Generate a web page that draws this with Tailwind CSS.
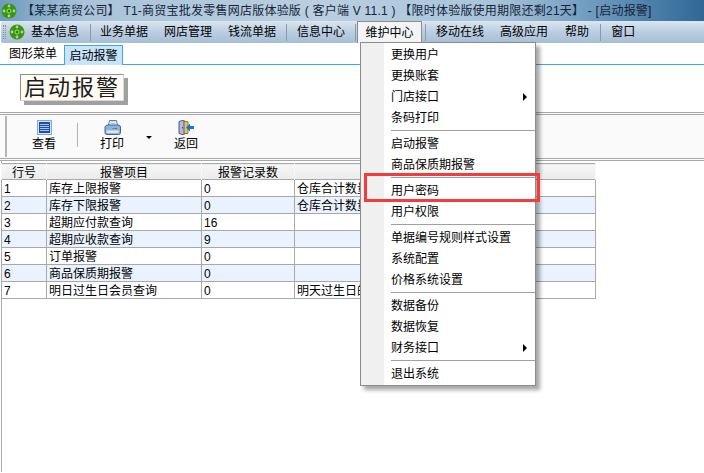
<!DOCTYPE html>
<html lang="zh">
  <head>
    <meta charset="UTF-8" />
    <title>启动报警</title>
    <script src="https://cdn.jsdelivr.net/npm/@tailwindcss/browser@4"></script>
  </head>
  <body class="relative w-[704px] h-[473px] overflow-hidden bg-white text-[12px] leading-[14px] text-black font-['Liberation_Sans','Noto_Sans_CJK_SC',sans-serif]">
    <!-- title bar -->
    <div class="h-[21px] flex items-center pl-[1px] bg-[linear-gradient(90deg,#6d9cc0_0%,#a9c3d8_12%,#b9cfe0_45%,#a9c4da_70%,#5f8fb5_88%,#2f6795_100%)] text-[#15233a]">
      <svg width="16" height="16" viewBox="0 0 16 16" class="shrink-0">
        <circle cx="8" cy="8" r="7.500" fill="#3c9414" />
        <circle cx="8" cy="8" r="2" fill="#2f7d10" stroke="#a6dc86" />
        <circle cx="8" cy="3" r="1.400" fill="#a6dc86" /><circle cx="8" cy="13" r="1.400" fill="#a6dc86" />
        <circle cx="3" cy="8" r="1.400" fill="#a6dc86" /><circle cx="13" cy="8" r="1.400" fill="#a6dc86" />
      </svg>
      <span class="ml-[5px] whitespace-pre tracking-[0.23px]">【某某商贸公司】 T1-商贸宝批发零售网店版体验版 ( 客户端 V 11.1 ) 【限时体验版使用期限还剩21天】 - [启动报警]</span>
    </div>

    <!-- menu bar -->
    <div class="h-[22px] ml-[1px] flex items-center bg-[linear-gradient(180deg,#dbe6f0_0%,#bdd0e2_45%,#a5bed6_100%)] rounded-l-[2px]">
      <div class="w-[3px] h-[14px] ml-[2px] border-x border-dotted border-[#7f8fa0]"></div>
      <svg width="16" height="16" viewBox="0 0 16 16" class="ml-[3px] shrink-0">
        <circle cx="8" cy="8" r="7.500" fill="#3c9414" />
        <circle cx="8" cy="8" r="2" fill="#2f7d10" stroke="#a6dc86" />
        <circle cx="8" cy="3" r="1.400" fill="#a6dc86" /><circle cx="8" cy="13" r="1.400" fill="#a6dc86" />
        <circle cx="3" cy="8" r="1.400" fill="#a6dc86" /><circle cx="13" cy="8" r="1.400" fill="#a6dc86" />
      </svg>
      <span class="ml-[6px]">基本信息</span>
      <div class="w-px h-[17px] bg-[#8c9aa8] ml-[11px]"></div>
      <span class="ml-[9px]">业务单据</span>
      <span class="ml-[16px]">网店管理</span>
      <span class="ml-[16px]">钱流单据</span>
      <div class="w-px h-[17px] bg-[#8c9aa8] ml-[10px]"></div>
      <span class="ml-[10px]">信息中心</span>
      <div class="w-px h-[17px] bg-[#8c9aa8] ml-[10px]"></div>
      <span class="ml-[1px] h-[22px] w-[65px] flex items-center justify-center bg-[#f2f4f6] border border-b-0 border-[#8c8c8c]">维护中心</span>
      <div class="w-px h-[17px] bg-[#8c9aa8] ml-[3px]"></div>
      <span class="ml-[10px]">移动在线</span>
      <span class="ml-[16px]">高级应用</span>
      <span class="ml-[17px]">帮助</span>
      <div class="w-px h-[17px] bg-[#8c9aa8] ml-[11px]"></div>
      <span class="ml-[10px]">窗口</span>
    </div>

    <!-- tabs -->
    <div class="h-[22px] flex items-end pl-[5px] border-b border-[#3da5f4]">
      <div class="h-[20px] w-[59px] flex items-center pl-[4px]">图形菜单</div>
      <div class="h-[20px] w-[59px] -mb-px flex items-center justify-center border border-b-0 border-[#3da5f4] bg-[#c7e4fb]">启动报警</div>
    </div>

    <!-- report title -->
    <div class="h-[47px] pt-[9px] pl-[20px]">
      <div class="w-[104px] h-[27px] flex items-center justify-center bg-[#fffaf2] border border-[#d8d8d8] border-t-[#8f8f8f] border-l-[#8f8f8f] shadow-[4px_4px_0_#a0a0a0] text-[22px] tracking-[2px] text-[#1c1c1c]">启动报警</div>
    </div>

    <!-- toolbar -->
    <div class="h-[49px] flex items-stretch bg-[#fafafa] border-y-[3px] border-double border-[#a8a8a8]">
      <div class="w-[2px] my-[1px] ml-[5px] border-x border-[#b4b4b4]"></div>
      <div class="w-[62px] ml-[6px] flex flex-col items-center pt-[5px]">
        <svg width="15" height="15" viewBox="0 0 15 15">
          <rect x="0.500" y="0.500" width="14" height="14" fill="#d6e6f8" stroke="#7fa8dc" />
          <rect x="2" y="2" width="11" height="11" fill="#1d4fa6" />
          <path d="M3 4.500h9M3 6.500h9M3 8.500h9M3 10.500h9" stroke="#a9c4ea" stroke-width="1" />
        </svg>
        <span class="mt-[2px]">查看</span>
      </div>
      <div class="w-px h-[24px] mt-[8px] ml-[2px] bg-[#b4b4b4]"></div>
      <div class="w-[62px] ml-[3px] flex flex-col items-center pt-[5px]">
        <svg width="17" height="15" viewBox="0 0 17 15">
          <path d="M5.500 0.500h7l1 5h-9z" fill="#f6f8fb" stroke="#5f7d9e" />
          <path d="M6.500 2h5M6.500 3.500h5" stroke="#b8c6d6" />
          <path d="M1 7 Q1.500 5 4 5h10q2.500 0 2.500 2v5.500q0 2-2 2H3q-2 0-2-2z" fill="#8fb2dc" stroke="#3f6797" />
          <path d="M2.500 10.500h12v2.500h-12z" fill="#d9e6f5" />
          <path d="M8.500 8h2v1h-2z" fill="#38a038" /><path d="M11 8h2v1h-2z" fill="#d84040" />
        </svg>
        <span class="mt-[2px]">打印</span>
      </div>
      <div class="ml-[3px] mt-[21px] w-0 h-0 border-x-[3px] border-x-transparent border-t-[3px] border-t-black"></div>
      <div class="w-[46px] ml-[11px] flex flex-col items-center pt-[5px]">
        <svg width="16" height="15" viewBox="0 0 16 15">
          <path d="M3 1.500h7v12H3z" fill="#f2c04c" stroke="#8f7a3a" />
          <path d="M1 1.500l5-1.500v15l-5-1.500z" fill="#aebbdc" stroke="#4d5d8c" />
          <path d="M4 7h1v1.500H4z" fill="#3d4f80" />
          <path d="M8 7.500l4-4v2.500h4v3h-4v2.500z" fill="#0f78d8" />
        </svg>
        <span class="mt-[2px]">返回</span>
      </div>
    </div>

    <!-- grid -->
    <div class="h-[311px] ml-[1px] pt-[2px] border-l border-[#a8a8a8]">
      <table class="w-[595px] table-fixed border-collapse -ml-px">
        <colgroup>
          <col class="w-[45px]" /><col class="w-[155px]" /><col class="w-[93px]" /><col />
        </colgroup>
        <thead>
          <tr class="h-[16px] bg-[linear-gradient(180deg,#f6f6f6,#ececec)] border border-[#a8a8a8]">
            <th class="font-normal leading-[12px] pt-[2px] border-x border-[#f8f8f8]">行号</th>
            <th class="font-normal leading-[12px] pt-[2px] border-x border-[#f8f8f8]">报警项目</th>
            <th class="font-normal leading-[12px] pt-[2px] border-x border-[#f8f8f8]">报警记录数</th>
            <th class="font-normal leading-[12px] pt-[2px] border-x border-[#f8f8f8]"></th>
          </tr>
        </thead>
        <tbody>
          <tr class="h-[17px]">
            <td class="border border-[#a8a8a8] pl-[2px] pt-[2px] overflow-hidden">1</td>
            <td class="border border-[#a8a8a8] pl-[2px] pt-[2px] overflow-hidden">库存上限报警</td>
            <td class="border border-[#a8a8a8] pl-[2px] pt-[2px] overflow-hidden">0</td>
            <td class="border border-[#a8a8a8] pl-[2px] pt-[2px] overflow-hidden whitespace-nowrap">仓库合计数量大于上限</td>
          </tr>
          <tr class="h-[17px] bg-[#eaf2fd]">
            <td class="border border-[#a8a8a8] pl-[2px] pt-[2px] overflow-hidden">2</td>
            <td class="border border-[#a8a8a8] pl-[2px] pt-[2px] overflow-hidden">库存下限报警</td>
            <td class="border border-[#a8a8a8] pl-[2px] pt-[2px] overflow-hidden">0</td>
            <td class="border border-[#a8a8a8] pl-[2px] pt-[2px] overflow-hidden whitespace-nowrap">仓库合计数量小于下限</td>
          </tr>
          <tr class="h-[17px]">
            <td class="border border-[#a8a8a8] pl-[2px] pt-[2px] overflow-hidden">3</td>
            <td class="border border-[#a8a8a8] pl-[2px] pt-[2px] overflow-hidden">超期应付款查询</td>
            <td class="border border-[#a8a8a8] pl-[2px] pt-[2px] overflow-hidden">16</td>
            <td class="border border-[#a8a8a8] pl-[2px] pt-[2px] overflow-hidden"></td>
          </tr>
          <tr class="h-[17px] bg-[#eaf2fd]">
            <td class="border border-[#a8a8a8] pl-[2px] pt-[2px] overflow-hidden">4</td>
            <td class="border border-[#a8a8a8] pl-[2px] pt-[2px] overflow-hidden">超期应收款查询</td>
            <td class="border border-[#a8a8a8] pl-[2px] pt-[2px] overflow-hidden">9</td>
            <td class="border border-[#a8a8a8] pl-[2px] pt-[2px] overflow-hidden"></td>
          </tr>
          <tr class="h-[17px]">
            <td class="border border-[#a8a8a8] pl-[2px] pt-[2px] overflow-hidden">5</td>
            <td class="border border-[#a8a8a8] pl-[2px] pt-[2px] overflow-hidden">订单报警</td>
            <td class="border border-[#a8a8a8] pl-[2px] pt-[2px] overflow-hidden">0</td>
            <td class="border border-[#a8a8a8] pl-[2px] pt-[2px] overflow-hidden"></td>
          </tr>
          <tr class="h-[17px] bg-[#eaf2fd]">
            <td class="border border-[#a8a8a8] pl-[2px] pt-[2px] overflow-hidden">6</td>
            <td class="border border-[#a8a8a8] pl-[2px] pt-[2px] overflow-hidden">商品保质期报警</td>
            <td class="border border-[#a8a8a8] pl-[2px] pt-[2px] overflow-hidden">0</td>
            <td class="border border-[#a8a8a8] pl-[2px] pt-[2px] overflow-hidden"></td>
          </tr>
          <tr class="h-[17px]">
            <td class="border border-[#a8a8a8] pl-[2px] pt-[2px] overflow-hidden">7</td>
            <td class="border border-[#a8a8a8] pl-[2px] pt-[2px] overflow-hidden">明日过生日会员查询</td>
            <td class="border border-[#a8a8a8] pl-[2px] pt-[2px] overflow-hidden">0</td>
            <td class="border border-[#a8a8a8] pl-[2px] pt-[2px] overflow-hidden whitespace-nowrap">明天过生日的会员</td>
          </tr>
        </tbody>
      </table>
    </div>

    <!-- dropdown menu -->
    <div class="absolute left-[360px] top-[42px] w-[176px] h-[344px] pt-[1px] bg-white border border-[#8c8c8c] shadow-[4px_4px_4px_rgba(0,0,0,0.35)]">
      <div class="absolute left-0 top-0 bottom-0 w-[23px] bg-[#f0f0f0]"></div>
      <div class="relative flex flex-col">
        <div class="h-[21px] flex items-center pl-[30px]">更换用户</div>
        <div class="h-[21px] flex items-center pl-[30px]">更换账套</div>
        <div class="h-[21px] flex items-center justify-between pl-[30px] pr-[8px]">门店接口<span class="w-0 h-0 border-y-[4px] border-y-transparent border-l-[4px] border-l-black"></span></div>
        <div class="h-[21px] flex items-center pl-[30px]">条码打印</div>
        <div class="h-[5px] flex items-center pl-[30px]"><div class="w-full h-px bg-[#a0a0a0]"></div></div>
        <div class="h-[21px] flex items-center pl-[30px]">启动报警</div>
        <div class="h-[21px] flex items-center pl-[30px]">商品保质期报警</div>
        <div class="h-[5px] flex items-center pl-[30px]"><div class="w-full h-px bg-[#a0a0a0]"></div></div>
        <div class="h-[21px] flex items-center pl-[30px]">用户密码</div>
        <div class="h-[21px] flex items-center pl-[30px]">用户权限</div>
        <div class="h-[5px] flex items-center pl-[30px]"><div class="w-full h-px bg-[#a0a0a0]"></div></div>
        <div class="h-[21px] flex items-center pl-[30px]">单据编号规则样式设置</div>
        <div class="h-[21px] flex items-center pl-[30px]">系统配置</div>
        <div class="h-[21px] flex items-center pl-[30px]">价格系统设置</div>
        <div class="h-[5px] flex items-center pl-[30px]"><div class="w-full h-px bg-[#a0a0a0]"></div></div>
        <div class="h-[21px] flex items-center pl-[30px]">数据备份</div>
        <div class="h-[21px] flex items-center pl-[30px]">数据恢复</div>
        <div class="h-[21px] flex items-center justify-between pl-[30px] pr-[8px]">财务接口<span class="w-0 h-0 border-y-[4px] border-y-transparent border-l-[4px] border-l-black"></span></div>
        <div class="h-[5px] flex items-center pl-[30px]"><div class="w-full h-px bg-[#a0a0a0]"></div></div>
        <div class="h-[21px] flex items-center pl-[30px]">退出系统</div>
      </div>
    </div>

    <!-- red highlight -->
    <div class="absolute left-[364px] top-[173px] w-[176px] h-[29px] border-[3px] border-[#f83a3a]"></div>
  </body>
</html>
